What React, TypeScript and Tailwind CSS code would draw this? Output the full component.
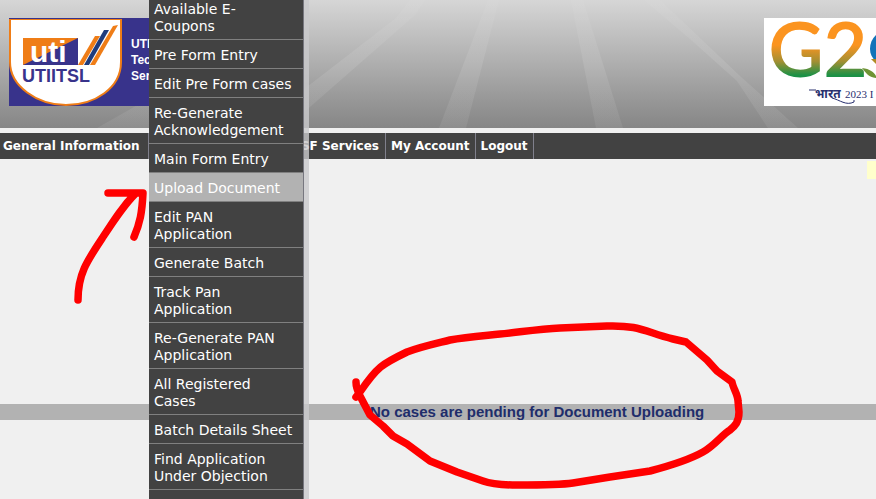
import { clsx } from 'clsx'

const MENU_ITEMS = [
  'Available E-Coupons',
  'Pre Form Entry',
  'Edit Pre Form cases',
  'Re-Generate Acknowledgement',
  'Main Form Entry',
  'Upload Document',
  'Edit PAN Application',
  'Generate Batch',
  'Track Pan Application',
  'Re-Generate PAN Application',
  'All Registered Cases',
  'Batch Details Sheet',
  'Find Application Under Objection',
]

const ACTIVE_ITEM = 'Upload Document'

const HeaderRays = () => (
  <svg
    className="absolute inset-0 h-full w-full"
    viewBox="0 0 876 128"
    preserveAspectRatio="none"
    fill="url(#ray)"
    aria-hidden="true"
  >
    <defs>
      <linearGradient id="ray" gradientUnits="userSpaceOnUse" x1="0" y1="0" x2="0" y2="128">
        <stop offset="0" stopColor="#fff" stopOpacity="0.03" />
        <stop offset="0.5" stopColor="#fff" stopOpacity="0.1" />
        <stop offset="1" stopColor="#fff" stopOpacity="0.07" />
      </linearGradient>
    </defs>
    <polygon points="97,128 150,98 150,128" />
    <polygon points="254,128 286,128 415,15 425,0 410,0 396,18" />
    <polygon points="439,128 466,128 499,0 488,0" />
    <polygon points="596,128 623,128 583,0 571,0" />
    <polygon points="768,128 798,128 740,76 660,0 644,0 690,39 737,81" />
  </svg>
)

const UtiLogo = () => (
  <svg className="h-[88px] w-[114px] shrink-0" viewBox="0 0 114 88" aria-label="UTIITSL" role="img">
    <path d="M1 1H112V44C112 70 86 87 57 87C28 87 1 68 1 44Z" fill="#fff" stroke="#ef7d17" strokeWidth="2" />
    <path d="M0 0.500H114" stroke="#38338b" />
    <path d="M14 20H69V47H14Z" fill="#38338b" />
    <path d="M14 20H69L14 47Z" fill="#ef7d17" />
    <text x="21" y="44" fontSize="30" fontWeight="700" fontFamily="Liberation Sans, sans-serif" fill="#fff">
      uti
    </text>
    <path d="M69 47L86 18H91L74 47Z" fill="#ef7d17" />
    <path d="M75 47L95 12H100L80 47Z" fill="#1f3c7d" />
    <path d="M81 47L104 8L109 7L86 47Z" fill="#ef7d17" />
    <text x="13" y="64" fontSize="18" fontWeight="700" fontFamily="Liberation Sans, sans-serif" fill="#38338b">
      UTIITSL
    </text>
  </svg>
)

const G20Logo = () => (
  <svg className="h-[88px] w-[112px] shrink-0 bg-white" viewBox="0 0 112 88" aria-label="G20" role="img">
    <defs>
      <linearGradient id="tricolor" gradientUnits="userSpaceOnUse" x1="0" y1="5" x2="0" y2="60">
        <stop offset="0.4" stopColor="#fb9420" />
        <stop offset="0.7" stopColor="#a28f33" />
        <stop offset="0.95" stopColor="#1c9146" />
      </linearGradient>
    </defs>
    <g fontSize="74" fontFamily="Lato, sans-serif" fill="url(#tricolor)" stroke="url(#tricolor)" strokeWidth="2">
      <text x="5" y="58">G</text>
      <text x="60" y="58">2</text>
    </g>
    <path d="M112 17C104 24 104 38 112 43Z" fill="#1273b9" />
    <path d="M107 41C110 44 111 45 112 46V41Z" fill="#b08b25" />
    <path d="M98 50C106 51 110 54 112 58V60C104 59 102 55 98 50Z" fill="#6f9334" />
    <text x="51" y="80" fontSize="12" fontWeight="700" fontFamily="Noto Sans, sans-serif" fill="#28306f">
      भारत
    </text>
    <path d="M45 72H52M68 80C76 82 82 88 90 84L90 82" fill="none" stroke="#28306f" />
    <text x="81" y="80" fontSize="11" fontFamily="Liberation Serif, serif" fill="#28306f">
      2023 I
    </text>
  </svg>
)

const Header = () => (
  <header className="relative flex h-32 items-start justify-between overflow-hidden bg-linear-to-b from-[#d6d6d6] via-[#aeaeae] to-[#868686] pt-[18px] pl-[9px]">
    <HeaderRays />
    <div className="relative flex bg-[#38338b]">
      <UtiLogo />
      <p className="pt-[18px] pl-2 text-[12px] leading-4 font-bold text-white">
        UTI
        <br />
        Tec
        <br />
        Ser
      </p>
    </div>
    <div className="relative">
      <G20Logo />
    </div>
  </header>
)

const navButton = 'border-r border-[#80808c] px-[5px] whitespace-nowrap'

const NavBar = () => (
  <nav className="mt-[5px] flex h-[26px] bg-[#424242] font-['DejaVu_Sans',sans-serif] text-[12px] font-bold text-white">
    <button className="w-[149px] border-r border-[#80808c] pl-[3px] text-left whitespace-nowrap">
      General Information
    </button>
    <button className="w-[237px] border-r border-[#80808c] pr-[6px] text-right whitespace-nowrap">
      SF Services
    </button>
    <button className={navButton}>My Account</button>
    <button className={navButton}>Logout</button>
  </nav>
)

const DropdownMenu = () => (
  <div className="absolute -top-1.5 bottom-0 left-[149px] w-40 border-r-[5px] border-[#c9c9cc]/80 font-['DejaVu_Sans',sans-serif]">
    <ul className="h-full border-r border-[#77777f] bg-[#424242]">
      {MENU_ITEMS.map(item => (
        <li key={item} className="border-b border-[#808080]">
          <a
            href="#"
            className={clsx(
              'block pt-[7px] pr-[9px] pb-1 pl-[5px] text-[14px] leading-[17px] text-white',
              item === ACTIVE_ITEM && 'bg-[#b2b2b2]'
            )}
          >
            {item}
          </a>
        </li>
      ))}
    </ul>
  </div>
)

// Hand-drawn marks pointing at the menu entry and the resulting message
const Annotations = () => (
  <svg
    className="pointer-events-none absolute top-0 left-0 h-[499px] w-[876px]"
    viewBox="0 0 876 499"
    fill="none"
    stroke="#ff0000"
    strokeWidth="7.500"
    strokeLinecap="round"
    strokeLinejoin="round"
    aria-hidden="true"
  >
    <path d="M78 300C78 274 87 261 103 237C114 220 123 206 135 194M108 193H143C142 213 140 223 134 237" />
    <path d="M356 397L360 392C377 367 382 364 407 352C420 347 434 344 450 340C465 337 480 336 500 334C520 332 540 329 560 328L607 326C640 325 645 332 673 339L686 342L707 360L717 371L732 382C733 388 738 395 738 401L739 412C739 422 735 426 730 430C722 435 714 446 703 452C687 461 669 466 650 471L610 477L573 483C560 485 540 485 517 485C503 485 491 484 483 481L457 472L430 461L407 444L393 436L383 426L370 415L360 396C357 390 356 387 356 382" />
  </svg>
)

const App = () => (
  <div className="relative min-h-screen overflow-hidden bg-[#f0f0f0] font-['Liberation_Sans',Arial,sans-serif]">
    <Header />
    <NavBar />
    <main className="flex flex-col pt-0.5">
      <div className="h-[18px] w-[9px] self-end bg-[#ffffcc]" />
      <p className="mt-[225px] bg-[#b2b2b2] pl-[370px] text-[15px] leading-4 font-bold text-[#202d6b]">
        No cases are pending for Document Uploading
      </p>
    </main>
    <DropdownMenu />
    <Annotations />
  </div>
)

export default App
